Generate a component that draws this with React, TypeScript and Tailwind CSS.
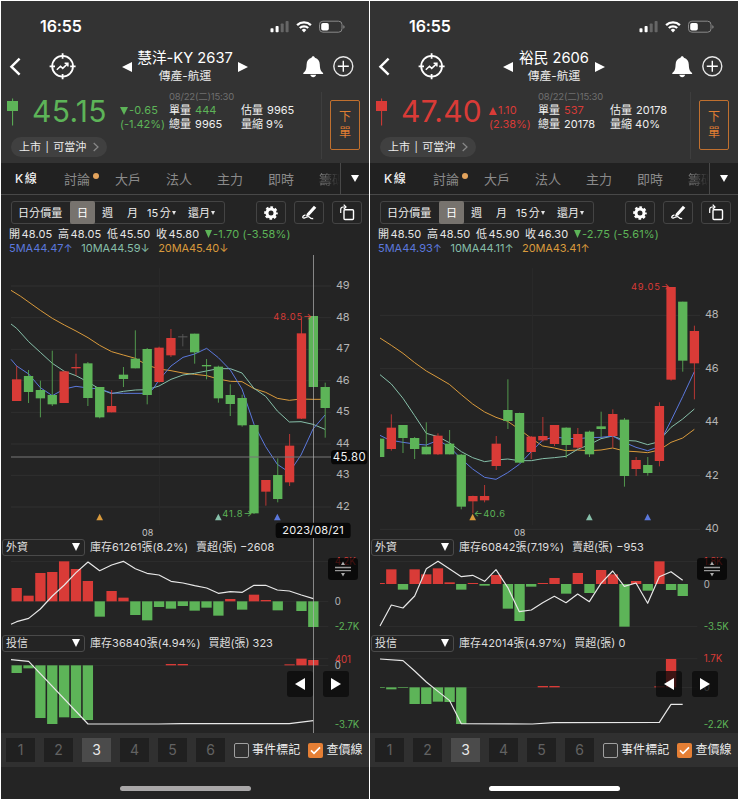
import React from "react";

const RED = "#d93b37";
const GREEN = "#5db458";
const ORANGE = "#d99a3c";
const TEAL = "#86bfa9";
const BLUE = "#5b78dc";

// [upper wick, body top, body bottom, lower wick, colour]
type Candle = [number, number, number, number, "r" | "g" | "n"];
// [slot, far edge of the bar, colour]
type Bar = [number, number, "r" | "g"];

type Stock = {
  title: string;
  gap: string;
  up: boolean;
  price: string;
  change: string;
  percent: string;
  single: string;
  total: string;
  estimate: string;
  shrink: string;
  ohlc: string[];
  diff: string;
  ma: string[];
  start: number;
  step: number;
  candles: Candle[];
  lines: { color: string; points: string }[];
  grid: [number, string][];
  month: number;
  monthLabel: number;
  marks: [number, string][];
  notes: { x: number; y: number; w: number; text: string; color: string }[];
  cross: boolean;
  panels: {
    name: string;
    stock: string;
    net: string;
    base: number;
    bars: Bar[];
    line: string;
    grid: number[];
    labels: [string, number, string][];
  }[];
  home: string;
};

const LEFT: Stock = {
  title: "慧洋-KY 2637",
  gap: "w-[126px]",
  up: false,
  price: "45.15",
  change: "-0.65",
  percent: "(-1.42%)",
  single: "444",
  total: "9965",
  estimate: "9965",
  shrink: "9%",
  ohlc: ["48.05", "48.05", "45.50", "45.80"],
  diff: "-1.70 (-3.58%)",
  ma: ["5MA44.47↑", "10MA44.59↓", "20MA45.40↓"],
  start: 50,
  step: 35.6,
  candles: [
    [333, 373, 438, 438, "r"], [345, 363, 411, 444, "g"], [377, 405, 430, 487, "g"],
    [287, 420, 448, 453, "g"], [347, 349, 444, 444, "r"], [296, 336, 340, 362, "r"],
    [321, 325, 429, 453, "g"], [396, 396, 487, 490, "g"], [405, 453, 472, 472, "r"],
    [336, 359, 372, 396, "g"], [226, 311, 340, 340, "g"], [279, 282, 420, 448, "g"],
    [275, 278, 381, 383, "r"], [222, 249, 301, 306, "r"], [237, 244, 246, 274, "n"],
    [236, 236, 292, 326, "g"], [312, 330, 334, 373, "g"], [332, 335, 430, 443, "g"],
    [388, 420, 447, 483, "g"], [419, 429, 511, 515, "g"], [510, 510, 775, 777, "g"],
    [675, 675, 710, 752, "r"], [610, 660, 732, 742, "g"], [537, 572, 682, 693, "r"],
    [190, 235, 491, 492, "r"], [183, 183, 396, 396, "g"], [383, 396, 459, 548, "g"],
  ],
  lines: [
    { color: ORANGE, points: "33,106 62,124 121,166 157,190 193,210 228,228 264,248 299,271 335,290 370,300 406,310 441,330 477,342 513,347 549,354 584,358 620,362 655,372 691,379 726,380 762,401 797,412 832,430 868,436 903,432 939,433 975,433" },
    { color: TEAL, points: "33,207 50,220 86,260 121,292 157,325 193,349 228,362 264,381 299,402 335,416 370,409 406,405 441,404 477,393 513,373 549,360 584,355 619,348 655,341 691,341 726,354 762,400 797,424 832,468 868,501 903,500 939,508 975,523" },
    { color: BLUE, points: "33,313 50,333 86,357 121,398 157,422 193,402 228,394 264,399 299,402 335,414 370,415 441,415 459,402 477,375 513,333 549,307 584,297 620,280 655,308 691,345 726,402 762,508 797,575 832,628 868,652 903,600 939,522 975,480" },
  ],
  grid: [[93, "49"], [188, "48"], [283, "47"], [377, "46"], [472, "45"], [567, "44"], [661, "43"], [756, "42"]],
  month: 478,
  monthLabel: 443,
  marks: [[299, ORANGE], [655, TEAL], [832, BLUE]],
  notes: [
    { x: 820, y: 185, w: 116, text: "48.05→", color: RED },
    { x: 667, y: 776, w: 90, text: "41.8→", color: GREEN },
  ],
  cross: true,
  panels: [
    {
      name: "外資",
      stock: "庫存61261張(8.2%)",
      net: "賣超(張) −2608",
      base: 199,
      bars: [
        [0, 159, "r"], [1, 182, "r"], [2, 114, "r"], [3, 111, "r"], [4, 79, "r"], [5, 102, "r"], [6, 138, "r"],
        [7, 245, "g"], [8, 168, "r"], [9, 188, "r"], [10, 240, "g"], [11, 256, "g"], [12, 216, "g"], [13, 221, "g"],
        [14, 213, "g"], [15, 227, "g"], [16, 218, "g"], [17, 242, "g"], [18, 192, "r"], [19, 224, "g"],
        [20, 179, "r"], [21, 195, "r"], [22, 226, "g"], [24, 228, "g"], [25, 276, "g"],
      ],
      line: "33,268 50,260 86,250 121,222 157,183 193,150 228,113 264,81 299,107 335,90 370,79 406,101 441,115 477,120 513,139 549,144 584,152 620,159 655,175 691,170 727,172 762,151 797,151 832,165 868,168 904,180 940,191",
      grid: [79, 199, 274],
      labels: [["4.2K", 81, RED], ["0", 201, "#b5b5b5"], ["-2.7K", 276, GREEN]],
    },
    {
      name: "投信",
      stock: "庫存36840張(4.94%)",
      net: "買超(張) 323",
      base: 391,
      bars: [
        [0, 414, "g"], [1, 400, "g"], [2, 549, "g"], [3, 567, "g"], [4, 547, "g"], [5, 549, "g"], [6, 555, "g"],
        [13, 387, "r"], [14, 387, "r"], [23, 388, "r"], [24, 371, "r"], [25, 375, "r"],
      ],
      line: "33,374 86,379 264,567 475,567 547,566 868,566 940,557",
      grid: [371, 391],
      labels: [["401", 373, RED], ["0", 392, "#b5b5b5"], ["-3.7K", 568, GREEN]],
    },
  ],
  home: "bg-[#a9a7a8]",
};

const RIGHT: Stock = {
  title: "裕民 2606",
  gap: "w-[102px]",
  up: true,
  price: "47.40",
  change: "1.10",
  percent: "(2.38%)",
  single: "537",
  total: "20178",
  estimate: "20178",
  shrink: "40%",
  ohlc: ["48.50", "48.50", "45.90", "46.30"],
  diff: "-2.75 (-5.61%)",
  ma: ["5MA44.93↑", "10MA44.11↑", "20MA43.41↑"],
  start: 32,
  step: 34.97,
  candles: [
    [549, 551, 606, 606, "g"], [478, 518, 582, 587, "r"], [510, 510, 549, 594, "g"], [546, 549, 582, 612, "g"],
    [502, 575, 598, 598, "g"], [535, 542, 598, 600, "r"], [525, 566, 598, 598, "g"], [597, 599, 755, 763, "g"],
    [722, 723, 739, 775, "r"], [690, 723, 736, 742, "r"], [543, 566, 633, 645, "r"], [373, 465, 498, 522, "g"],
    [473, 474, 623, 623, "g"], [543, 545, 591, 612, "r"], [486, 543, 556, 560, "r"], [510, 510, 567, 573, "r"],
    [517, 518, 570, 609, "g"], [519, 537, 578, 582, "r"], [527, 530, 598, 606, "g"], [470, 514, 522, 546, "g"],
    [463, 477, 543, 578, "r"], [489, 494, 663, 695, "g"], [606, 615, 642, 663, "r"], [606, 630, 654, 662, "g"],
    [442, 453, 618, 634, "r"], [96, 96, 374, 377, "r"], [140, 140, 317, 350, "g"], [212, 228, 325, 433, "r"],
  ],
  lines: [
    { color: ORANGE, points: "33,249 67,271 102,295 137,323 172,348 207,368 241,388 277,419 311,447 347,471 381,487 416,499 451,523 487,550 521,573 556,579 591,587 626,585 661,587 696,585 731,579 766,588 801,590 836,593 871,585 906,562 941,549 976,523" },
    { color: TEAL, points: "33,359 67,387 102,430 137,482 172,535 207,545 241,563 277,590 311,608 347,620 381,615 416,612 451,617 487,617 521,611 556,608 591,604 626,583 661,569 696,551 731,543 766,556 801,558 836,569 871,560 884,542 906,517 941,492 976,462" },
    { color: BLUE, points: "33,541 55,552 67,556 102,562 137,567 172,570 207,556 241,575 277,612 311,642 347,667 381,673 416,653 451,628 487,590 521,555 556,546 591,550 626,551 661,548 696,547 731,543 766,562 801,577 836,587 871,575 884,540 906,497 941,425 976,350" },
  ],
  grid: [[181, "48"], [341, "46"], [502, "44"], [662, "42"], [823, "40"]],
  month: 490,
  monthLabel: 452,
  marks: [[311, ORANGE], [661, TEAL], [836, BLUE]],
  notes: [
    { x: 786, y: 97, w: 116, text: "49.05→", color: RED },
    { x: 314, y: 776, w: 94, text: "←40.6", color: GREEN },
  ],
  cross: false,
  panels: [
    {
      name: "外資",
      stock: "庫存60842張(7.19%)",
      net: "賣超(張) −953",
      base: 147,
      bars: [
        [0, 144, "r"], [1, 103, "r"], [2, 164, "g"], [3, 103, "r"], [4, 118, "r"], [5, 100, "r"], [6, 142, "r"],
        [7, 164, "g"], [8, 144, "r"], [9, 152, "g"], [10, 120, "r"], [11, 221, "g"], [12, 258, "g"], [13, 155, "g"],
        [14, 144, "r"], [15, 129, "r"], [16, 176, "g"], [17, 114, "r"], [18, 174, "g"], [19, 105, "r"],
        [20, 118, "r"], [21, 275, "g"], [22, 138, "r"], [23, 167, "g"], [24, 79, "r"], [25, 165, "g"], [26, 183, "g"],
      ],
      line: "33,273 67,210 102,219 137,183 172,101 207,79 277,125 311,121 347,139 381,104 416,157 451,230 487,225 521,203 556,184 591,203 626,177 661,200 696,145 731,108 766,154 801,144 836,205 871,125 906,110 941,136",
      grid: [79, 274],
      labels: [["1.8K", 81, RED], ["0", 148, "#b5b5b5"], ["-3.5K", 276, GREEN]],
    },
    {
      name: "投信",
      stock: "庫存42014張(4.97%)",
      net: "買超(張) 0",
      base: 457,
      bars: [
        [0, 459, "g"], [1, 463, "g"], [2, 459, "g"], [3, 507, "g"], [4, 507, "g"], [5, 500, "g"], [6, 501, "g"],
        [7, 567, "g"], [14, 453, "r"], [15, 453, "r"], [24, 454, "r"], [25, 372, "r"],
      ],
      line: "33,372 102,377 137,408 172,441 207,469 242,497 277,566 490,567 555,563 871,562 906,508 941,508",
      grid: [371, 457],
      labels: [["1.7K", 372, RED], ["0", 459, "#b5b5b5"], ["-2.2K", 568, GREEN]],
    },
  ],
  home: "bg-white",
};

const tone = (c: string) => (c === "r" ? RED : c === "g" ? GREEN : "#5c5c5c");

function StatusBar() {
  return (
    <div className="flex h-[49px] items-center pl-[39px] pr-[24px]">
      <span className="text-[16px] font-semibold leading-none tracking-[-0.1px]">16:55</span>
      <svg className="ml-auto" width="76" height="16" viewBox="0 0 76 16">
        <rect x="1.5" y="10.3" width="3" height="4" rx="0.8" fill="#fff" />
        <rect x="6.6" y="8" width="3" height="6.3" rx="0.8" fill="#fff" />
        <rect x="11.7" y="5.5" width="3" height="8.8" rx="0.8" fill="#666" />
        <rect x="16.6" y="3" width="3" height="11.3" rx="0.8" fill="#666" />
        <g fill="none" stroke="#fff" strokeWidth="2.3">
          <path d="M28.1 7.1a10 10 0 0 1 13.8 0" />
          <path d="M30.8 10a6.1 6.1 0 0 1 8.4 0" />
        </g>
        <path d="M32.7 11.9a3.4 3.4 0 0 1 4.6 0L35 14.4z" fill="#fff" />
        <rect x="50.5" y="3.2" width="22.5" height="11" rx="3.4" fill="none" stroke="#8a8a8a" />
        <rect x="52.2" y="4.9" width="7.6" height="7.6" rx="1.8" fill="#fff" />
        <path d="M74.3 7.2v3.4c1-.3 1.3-1 1.3-1.7s-.3-1.4-1.3-1.7z" fill="#8a8a8a" />
      </svg>
    </div>
  );
}

function NavBar({ s }: { s: Stock }) {
  return (
    <div className="flex h-[41px] items-center pb-[8px] text-white">
      <svg width="80" height="33" viewBox="1 50 80 33" fill="none" stroke="#fff" className="shrink-0">
        <path d="M19.6 58.6 11.4 66.700l8.200 8" strokeWidth="2.4" />
        <circle cx="62.6" cy="66.3" r="10.4" strokeWidth="1.8" />
        <path d="M62.6 53.3v5.4M62.6 73.9v5.4M49.6 66.3H55M70.2 66.3h5.4" strokeWidth="1.8" />
        <path d="m56.8 69.8 3.7-3.6 2.2 2.2 5-4.8M64.6 63.3h3.3v3.3" strokeWidth="1.5" />
      </svg>
      <div className="flex min-w-0 flex-1 justify-center">
        <div className={`flex items-center justify-between ${s.gap} mr-[8px]`}>
          <svg width="10" height="10" viewBox="0 0 10 10" className="shrink-0"><path d="M10 0v10L0 5z" fill="#fff" /></svg>
          <div className="flex flex-col items-center whitespace-nowrap">
            <span className="text-[14.7px] leading-[20px]">{s.title}</span>
            <span className="text-[11.8px] leading-[17px] text-[#ececec]">傳產-航運</span>
          </div>
          <svg width="10" height="10" viewBox="0 0 10 10" className="shrink-0"><path d="M0 0v10l10-5z" fill="#fff" /></svg>
        </div>
      </div>
      <svg width="72" height="33" viewBox="297 50 72 33" className="shrink-0">
        <path d="M313.2 56.3c.9 0 1.5.6 1.7 1.5 3.3.8 4.7 3.3 4.9 6.7.2 4.8.8 6.500 3.300 8.600v.9H303.300v-.9c2.500-2.100 3.100-3.800 3.300-8.600.2-3.400 1.600-5.900 4.900-6.700.2-.9.8-1.500 1.700-1.500z" fill="#fff" />
        <path d="M310.300 74.800h5.800c-.3 1.500-1.400 2.400-2.900 2.400s-2.600-.9-2.900-2.400z" fill="#fff" />
        <circle cx="343.300" cy="66.300" r="9.500" fill="none" stroke="#e8e8e8" strokeWidth="1.400" />
        <path d="M343.300 60.800v11M337.800 66.300h11" stroke="#fff" strokeWidth="1.400" />
      </svg>
    </div>
  );
}

function Quote({ s }: { s: Stock }) {
  const color = s.up ? "text-[#d93b37]" : "text-[#5db458]";
  const fill = s.up ? RED : GREEN;
  return (
    <div className="flex h-[72px]">
      <div className="flex w-[320px] flex-col">
        <div className="flex h-[43px]">
          <svg width="17" height="43" viewBox="1 91 17 43" className="shrink-0">
            <path d="M12.600 98.500v27" stroke={fill} strokeWidth="1" />
            <rect x="7" y="101" width="11" height="10" fill={fill} />
          </svg>
          <div className={`w-[100px] shrink-0 whitespace-nowrap pl-[14px] pt-[4px] text-[30px] leading-[32px] tracking-[0.3px] ${color}`}>{s.price}</div>
          <div className={`w-[50px] shrink-0 pl-[2px] pt-[13px] text-[11px] leading-[13.500px] ${color}`}>
            <div className="flex items-center tracking-[0.2px]">
              <svg width="8" height="8" viewBox="0 0 8 8" className="mr-[1px]">
                <path d={s.up ? "M4 0l4 8H0z" : "M0 0h8L4 8z"} fill={fill} />
              </svg>
              {s.change}
            </div>
            <div className="whitespace-nowrap tracking-[-0.05px]">{s.percent}</div>
          </div>
          <div className="pl-[1px] text-[11px] leading-[13.500px] text-[#efefef]">
            <div className="h-[13px] whitespace-nowrap text-[9.500px] leading-[11px] tracking-[-0.2px] text-[#707070]">08/22(二)15:30</div>
            <div className="grid grid-cols-[72px_auto] whitespace-nowrap">
              <span>單量 <span className={`pl-[1px] ${color}`}>{s.single}</span></span>
              <span>估量 <span className="pl-[1px]">{s.estimate}</span></span>
              <span>總量 <span className="pl-[1px]">{s.total}</span></span>
              <span>量縮 {s.shrink}</span>
            </div>
          </div>
        </div>
        <div className="ml-[10px] mt-[3px] flex h-[20px] w-[96px] items-center whitespace-nowrap rounded-full bg-[#404040] pl-[8px] text-[11px] leading-none text-[#ececec]">
          上市<span className="px-[4.500px] text-[10px]">|</span>可當沖
          <svg width="6" height="10" viewBox="0 0 6 10" className="ml-[7px]"><path d="m.7 1 4.300 4-4.300 4" fill="none" stroke="#888" strokeWidth="1.200" /></svg>
        </div>
      </div>
      <div className="mt-[1px] flex h-[67px] flex-1 border-l border-[#3e3e3e]">
        <div className="ml-[8px] mt-[8px] flex h-[50px] w-[30px] flex-col items-center justify-center rounded-[2px] border border-[#c0702f] text-[12px] leading-[16px] text-[#e07f33]">
          <span>下</span>
          <span>單</span>
        </div>
      </div>
    </div>
  );
}

function Tabs() {
  const tabs = ["討論", "大戶", "法人", "主力", "即時"];
  return (
    <div className="flex h-[32px] items-center border-b border-[#484848] bg-[#212121] text-[13px] leading-[22px] text-[#8b8b8b]">
      <div className="flex w-[339px] items-center overflow-hidden whitespace-nowrap pl-[14px]">
        <span className="w-[49px] shrink-0 text-[12px] font-medium text-[#f0f0f0]">K<span className="pl-[1.500px]">線</span></span>
        {tabs.map((t, i) => (
          <span key={t} className="flex w-[51px] shrink-0">
            {t}
            {i === 0 && <i className="ml-[3px] mt-[5px] h-[6px] w-[6px] rounded-full bg-[#e3a35c]" />}
          </span>
        ))}
        <span className="w-[21px] overflow-hidden bg-gradient-to-r from-[#8b8b8b] to-[#212121] bg-clip-text text-transparent">籌碼</span>
      </div>
      <div className="flex h-full flex-1 items-center justify-center border-l border-[#484848]">
        <svg width="8" height="7" viewBox="0 0 8 7"><path d="M0 0h8L4 7z" fill="#fff" /></svg>
      </div>
    </div>
  );
}

function ToolButton({ children }: { children: React.ReactNode }) {
  return (
    <div className="flex h-[23px] w-[30px] items-center justify-center rounded-[3px] border border-[#444]">{children}</div>
  );
}

function Caret() {
  return (
    <svg width="4" height="4" viewBox="0 0 4 4" className="ml-[1px] inline-block"><path d="M0 0h4L2 4z" fill="#e4e4e4" /></svg>
  );
}

function Toolbar() {
  return (
    <div className="flex h-[34px] items-center pl-[10px] pr-[7px] pt-[1px] text-[11px] leading-[16px] text-[#ececec]">
      <div className="flex h-[23px] w-[214px] items-center whitespace-nowrap rounded-[3px] border border-[#444]">
        <span className="w-[58px] pl-[6px] tracking-[0.1px]">日分價量</span>
        <span className="flex h-[23px] w-[25px] items-center justify-center rounded-[2px] bg-[#77736e] text-white">日</span>
        <span className="w-[25px] pl-[7px]">週</span>
        <span className="w-[26px] pl-[7px]">月</span>
        <span className="flex w-[42px] items-center pl-[1px]">15<span className="pl-[1.500px]">分</span><Caret /></span>
        <span className="flex items-center">還月<Caret /></span>
      </div>
      <div className="ml-auto flex gap-[8px]">
        <ToolButton>
          <svg width="14" height="14" viewBox="0 0 14 14">
            <circle cx="7" cy="7" r="4" fill="none" stroke="#fff" strokeWidth="3" />
            <circle cx="7" cy="7" r="5.800" fill="none" stroke="#fff" strokeWidth="2" strokeDasharray="2.600 1.955" strokeDashoffset="1.300" />
          </svg>
        </ToolButton>
        <ToolButton>
          <svg width="16" height="16" viewBox="0 0 16 16">
            <path d="M12.900.8 15.300 2.700 8.300 10.600 4.800 11.500 6 8.600z" fill="#fff" />
            <path d="M4.500 9.800c-3.500 1-3.500 3.600-1.200 3.200 2-.3 3-1.800 4.700-1.200 1.500.6 1 2.500 4.200 1.700" fill="none" stroke="#fff" strokeWidth="1.300" />
          </svg>
        </ToolButton>
        <ToolButton>
          <svg width="16" height="17" viewBox="0 0 16 17" fill="none" stroke="#fff">
            <rect x="5" y="5.700" width="9.500" height="9.800" rx="1" strokeWidth="1.400" />
            <path d="M1.700 9V5.500c0-1.600.9-2.500 2.500-2.500h2.300" strokeWidth="1.200" />
            <path d="M4.700.7 7 3 4.700 5.200" strokeWidth="1.200" />
          </svg>
        </ToolButton>
      </div>
    </div>
  );
}

function Summary({ s }: { s: Stock }) {
  return (
    <div className="-mt-[2px] h-[28px] whitespace-nowrap pl-[8px] text-[11px] leading-[14px]">
      <div className="flex items-center text-[#e6e6e6]">
        {["開", "高", "低", "收"].map((k, i) => (
          <span key={k} className="w-[49px] tracking-[0.1px]">
            {k}<span className="pl-[1.500px]">{s.ohlc[i]}</span>
          </span>
        ))}
        <span className="flex items-center tracking-[0.15px] text-[#5db458]">
          <svg width="7" height="8" viewBox="0 0 7 8" className="mr-[1px]"><path d="M0 0h7L3.500 8z" fill={GREEN} /></svg>
          {s.diff}
        </span>
      </div>
      <div className="flex gap-[8.500px]">
        <span className="text-[#5b78dc]">{s.ma[0]}</span>
        <span className="text-[#86bfa9]">{s.ma[1]}</span>
        <span className="tracking-[-0.1px] text-[#d99a3c]">{s.ma[2]}</span>
      </div>
    </div>
  );
}

function PriceChart({ s, id }: { s: Stock; id: string }) {
  return (
    <svg width="368" height="283" viewBox="3 0 1104 849" className="block shrink-0">
      <clipPath id={id}><rect x="33" y="0" width="1070" height="849" /></clipPath>
      {s.grid.map(([y, t]) => (
        <g key={t}>
          <path d={`M33 ${y}H993`} stroke="#303030" strokeWidth="3" />
          <text x="1008" y={y + 9} fontSize="33" fill="#b5b5b5" textLength="41">{t}</text>
        </g>
      ))}
      <path d={`M${s.month} 40V810`} stroke="#2b2b2b" strokeWidth="3" />
      <g fill="none" strokeWidth="3" strokeLinejoin="round">
        {s.lines.map((l) => (
          <polyline key={l.color} points={l.points} stroke={l.color} />
        ))}
      </g>
      <g clipPath={`url(#${id})`}>
        {s.candles.map(([hi, a, b, lo, c], i) => {
          const x = s.start + s.step * i;
          return (
            <g key={i} fill={tone(c)}>
              <rect x={x - 1.500} y={hi} width="3" height={lo - hi} opacity="0.8" />
              <rect x={x - 14} y={a} width="28" height={Math.max(b - a, 3)} />
            </g>
          );
        })}
      </g>
      {s.marks.map(([x, c]) => (
        <path key={c} d={`M${x} 776l10 20h-20z`} fill={c} />
      ))}
      {s.notes.map((n) => (
        <text key={n.text} x={n.x} y={n.y + 9} fontSize="28" textLength={n.w} fill={n.color}>{n.text}</text>
      ))}
      <text x={s.monthLabel} y="842" fontSize="27" fill="#c4c4c4" textAnchor="middle">08</text>
      {s.cross && (
        <g>
          <path d="M33 606H993" stroke="#777" strokeWidth="3.500" />
          <path d="M940.500 0V849" stroke="#b0b0b0" strokeOpacity="0.7" strokeWidth="3" />
          <rect x="993" y="585" width="109" height="43" rx="11" fill="#080808" />
          <text x="998" y="619" fontSize="34" fill="#f2f2f2" textLength="99">45.80</text>
          <rect x="827" y="803" width="225" height="47" rx="10" fill="#080808" />
          <text x="847" y="838" fontSize="33" fill="#f2f2f2" textLength="184">2023/08/21</text>
        </g>
      )}
    </svg>
  );
}

function FlowChart({ s, index, id }: { s: Stock; index: number; id: string }) {
  const p = s.panels[index];
  const top = index === 0 ? 63 : 351;
  const h = index === 0 ? 79 : 81;
  return (
    <div>
      <div className="flex h-[18px] items-center whitespace-nowrap text-[11px] leading-[16px] text-[#dedede]">
        <div className="ml-[1px] flex h-[17px] w-[83px] items-center justify-between rounded-[3px] border border-[#4a4a4a] pl-[3px] pr-[4px]">
          {p.name}
          <svg width="8" height="8" viewBox="0 0 8 8"><path d="M0 0h8L4 8z" fill="#fff" /></svg>
        </div>
        <span className="pl-[5px] tracking-[0.03px]">{p.stock}</span>
        <span className="pl-[8px]">{p.net}</span>
      </div>
      <svg width="368" height={h} viewBox={`3 ${top} 1104 ${h * 3}`} className="block">
        <clipPath id={id}><rect x="33" y="0" width="1070" height="600" /></clipPath>
        {p.grid.map((y) => (
          <path key={y} d={`M33 ${y}H985`} stroke="#2e2e2e" strokeWidth="3" />
        ))}
        <g clipPath={`url(#${id})`}>
          {p.bars.map(([i, v, c]) => (
            <rect
              key={i}
              x={s.start + s.step * i - 15.500}
              y={Math.min(v, p.base)}
              width="31"
              height={Math.abs(v - p.base)}
              fill={tone(c)}
            />
          ))}
        </g>
        <polyline points={p.line} fill="none" stroke="#e8e8e8" strokeWidth="3.500" strokeLinejoin="round" />
        {p.labels.map(([t, y, c]) => (
          <text key={t} x="1004" y={y + 10} fontSize="29" fill={c}>{t}</text>
        ))}
      </svg>
    </div>
  );
}

function Footer({ home }: { home: string }) {
  return (
    <>
      <div className="flex h-[34px] shrink-0 items-center bg-[#303030] pl-[5px] text-[12px] leading-[18px] text-[#ececec]">
        <div className="flex gap-[9px]">
          {["1", "2", "3", "4", "5", "6"].map((n) => (
            <span
              key={n}
              className={`flex h-[24px] w-[29px] items-center justify-center text-[14px] ${
                n === "3" ? "bg-[#4b4b4b] text-[#e8e8e8]" : "bg-[#202020] text-[#626262]"
              }`}
            >
              {n}
            </span>
          ))}
        </div>
        <span className="ml-[9px] h-[15px] w-[15px] rounded-[2px] border border-[#a0a0a0]" />
        <span className="ml-[3px] whitespace-nowrap tracking-[0.1px]">事件標記</span>
        <span className="ml-[8px] flex h-[15px] w-[15px] items-center justify-center rounded-[2px] bg-[#e57f35]">
          <svg width="11" height="9" viewBox="0 0 11 9"><path d="M1 4.400 4 7.300 10 1.300" fill="none" stroke="#fff" strokeWidth="1.700" /></svg>
        </span>
        <span className="ml-[3px] whitespace-nowrap">查價線</span>
      </div>
      <div className="flex h-[32px] shrink-0 justify-center pt-[19px]">
        <div className={`h-[5px] w-[131px] rounded-full ${home}`} />
      </div>
    </>
  );
}

function Phone({ s, id }: { s: Stock; id: string }) {
  return (
    <div className="flex h-[798px] w-[368px] flex-col overflow-hidden bg-[#242424] text-white">
      <div className="h-[162px] shrink-0 bg-[#333]">
        <StatusBar />
        <NavBar s={s} />
        <Quote s={s} />
      </div>
      <Tabs />
      <Toolbar />
      <Summary s={s} />
      <PriceChart s={s} id={`${id}-price`} />
      <div className="relative h-[195px] shrink-0">
        <FlowChart s={s} index={0} id={`${id}-foreign`} />
        <div className="-mt-px">
          <FlowChart s={s} index={1} id={`${id}-trust`} />
        </div>
        {s.cross && <div className="absolute left-[312px] top-0 h-[195px] w-px bg-[#b0b0b0]/70" />}
        <div className="absolute left-[327px] top-[20px] flex h-[22px] w-[30px] items-center justify-center rounded-[3px] bg-black/70">
          <svg width="16" height="16" viewBox="0 0 16 16">
            <path d="M0 6.500h16M0 9.700h16" stroke="#999" strokeWidth="1.300" />
            <path d="M8 .5l2 3.500H6zM8 15.500l2-3.500H6z" fill="#aaa" />
          </svg>
        </div>
        <div className="absolute left-[286px] top-[133px] flex gap-[10px]">
          <div className="flex h-[26px] w-[26px] items-center justify-center rounded-[3px] bg-[#0a0a0a]/75">
            <svg width="10" height="12" viewBox="0 0 10 12"><path d="M10 0v12L0 6z" fill="#fff" /></svg>
          </div>
          <div className="flex h-[26px] w-[26px] items-center justify-center rounded-[3px] bg-[#0a0a0a]/75">
            <svg width="10" height="12" viewBox="0 0 10 12"><path d="M0 0v12l10-6z" fill="#fff" /></svg>
          </div>
        </div>
      </div>
      <Footer home={s.home} />
    </div>
  );
}

export default function App() {
  return (
    <div className="flex h-[800px] w-[739px] gap-px bg-white p-px font-['Inter','Noto_Sans_CJK_TC',sans-serif]">
      <Phone s={LEFT} id="a" />
      <Phone s={RIGHT} id="b" />
    </div>
  );
}
